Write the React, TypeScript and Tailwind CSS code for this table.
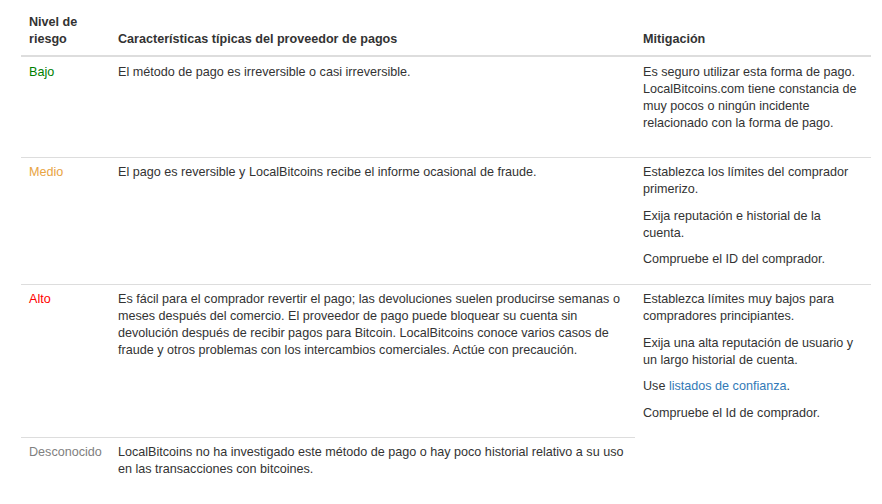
import React from "react";

type Row = {
  level: string;
  color: string;
  text: string;
};

const rows: Row[] = [
  {
    level: "Bajo",
    color: "text-[#008000]",
    text: "El método de pago es irreversible o casi irreversible.",
  },
  {
    level: "Medio",
    color: "text-[#e8a443]",
    text: "El pago es reversible y LocalBitcoins recibe el informe ocasional de fraude.",
  },
  {
    level: "Alto",
    color: "text-[#ff0000]",
    text: "Es fácil para el comprador revertir el pago; las devoluciones suelen producirse semanas o meses después del comercio. El proveedor de pago puede bloquear su cuenta sin devolución después de recibir pagos para Bitcoin. LocalBitcoins conoce varios casos de fraude y otros problemas con los intercambios comerciales. Actúe con precaución.",
  },
  {
    level: "Desconocido",
    color: "text-[#808080]",
    text: "LocalBitcoins no ha investigado este método de pago o hay poco historial relativo a su uso en las transacciones con bitcoines.",
  },
];

const P: React.FC<{ children: React.ReactNode }> = ({ children }) => (
  <p className="mb-[9.5px]">{children}</p>
);

export default function App() {
  const head = "flex items-end px-2 pb-[7px] border-b-2 border-[#dddddd] font-bold";
  const cell = (first: boolean) =>
    `px-2 pb-2 ${first ? "pt-[7px]" : "pt-[6px] border-t border-[#dddddd]"}`;

  return (
    <div
      className="min-h-screen bg-white pt-[7px] pl-[21px] text-[12.6px] leading-[17px] text-[#333333]"
      style={{ fontFamily: '"Liberation Sans", Arial, sans-serif' }}
    >
      <div className="grid grid-cols-[89px_525px_236px] grid-rows-[50px_100px_127px_153px_auto]">
        <div className={head}>
          Nivel de
          <br />
          riesgo
        </div>
        <div className={head}>Características típicas del proveedor de pagos</div>
        <div className={head}>Mitigación</div>

        {/* Bajo */}
        <div className={`${cell(true)} ${rows[0].color}`}>{rows[0].level}</div>
        <div className={cell(true)}>{rows[0].text}</div>
        <div className={cell(true)}>
          <P>
            Es seguro utilizar esta forma de pago. LocalBitcoins.com tiene constancia de muy
            pocos o ningún incidente relacionado con la forma de pago.
          </P>
        </div>

        {/* Medio */}
        <div className={`${cell(false)} ${rows[1].color}`}>{rows[1].level}</div>
        <div className={cell(false)}>{rows[1].text}</div>
        <div className={cell(false)}>
          <P>Establezca los límites del comprador primerizo.</P>
          <P>Exija reputación e historial de la cuenta.</P>
          <P>Compruebe el ID del comprador.</P>
        </div>

        {/* Alto */}
        <div className={`${cell(false)} ${rows[2].color}`}>{rows[2].level}</div>
        <div className={cell(false)}>{rows[2].text}</div>
        <div className={`${cell(false)} row-span-2`}>
          <P>Establezca límites muy bajos para compradores principiantes.</P>
          <P>Exija una alta reputación de usuario y un largo historial de cuenta.</P>
          <P>
            Use <a className="text-[#337ab7]" href="#">listados de confianza</a>.
          </P>
          <P>Compruebe el Id de comprador.</P>
        </div>

        {/* Desconocido */}
        <div className={`${cell(false)} ${rows[3].color}`}>{rows[3].level}</div>
        <div className={cell(false)}>{rows[3].text}</div>
      </div>
    </div>
  );
}
